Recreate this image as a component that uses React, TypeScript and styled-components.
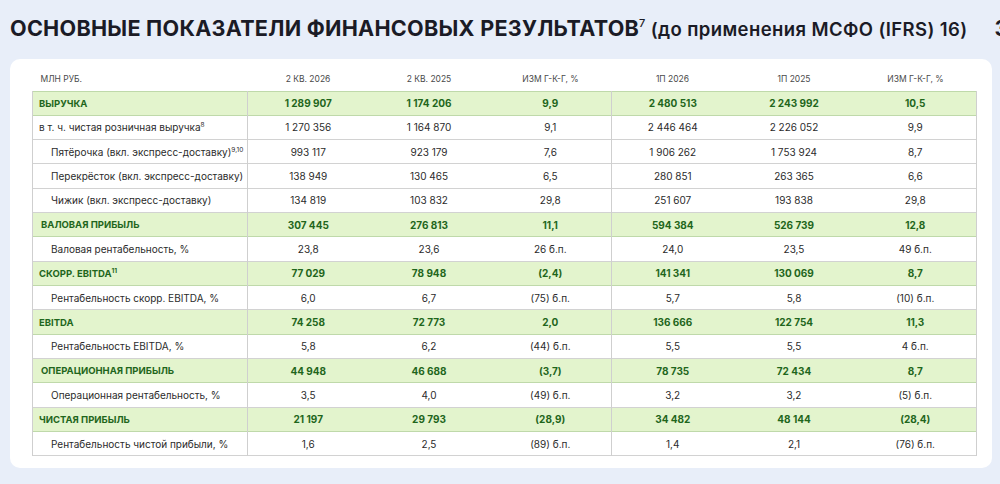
import React from "react";
import styled, { createGlobalStyle } from "styled-components";

const Global = createGlobalStyle`
  html, body { margin: 0; padding: 0; }
  body {
    background: #e8eef9;
    font-family: Inter, "Noto Sans", sans-serif;
    overflow: hidden;
    width: 1000px;
    height: 484px;
  }
`;

const Page = styled.div`
  padding: 0 8px 0 10px;
  height: 484px;
  box-sizing: border-box;
`;

const Title = styled.h1`
  margin: 0 0 17px 0;
  padding-top: 15px;
  line-height: 26px;
  font-size: 21.6px;
  font-weight: 700;
  color: #1b1b26;
  white-space: nowrap;
  letter-spacing: 0.25px;
`;

const TitleSup = styled.sup`
  font-size: 11px;
  font-weight: 500;
  vertical-align: 9px;
  line-height: 0;
`;

const Subtitle = styled.span`
  font-size: 18.5px;
  font-weight: 600;
  margin-left: 5px;
  letter-spacing: 0.4px;
`;

const Cut = styled.span`
  margin-left: 27px;
`;

const Card = styled.div`
  background: #ffffff;
  border-radius: 10px;
  width: 982px;
  box-sizing: border-box;
  padding: 0 16px 12px 22px;
`;

const Table = styled.table`
  width: 944px;
  border-collapse: collapse;
  table-layout: fixed;
  font-size: 10px;
  color: #262626;
`;

const Head = styled.th<{ $left?: boolean }>`
  height: 32px;
  box-sizing: border-box;
  padding: 9px 0 0 ${(p) => (p.$left ? "8px" : "0")};
  font-size: 8.5px;
  font-weight: 400;
  color: #4a4a4a;
  text-align: ${(p) => (p.$left ? "left" : "center")};
  text-transform: uppercase;
  white-space: nowrap;
`;

const Row = styled.tr<{ $total?: boolean }>`
  height: 24.33px;
  background: ${(p) => (p.$total ? "#e3f4cd" : "#ffffff")};
  border-top: 1px solid ${(p) => (p.$total ? "#bfd9aa" : "#d2d2d2")};
  border-bottom: 1px solid ${(p) => (p.$total ? "#bfd9aa" : "#d2d2d2")};
`;

const Label = styled.td<{ $total?: boolean; $indent: number }>`
  padding: 0 0 0 ${(p) => p.$indent}px;
  border-left: 1px solid #cfcfcf;
  border-right: 1px solid #cfcfcf;
  font-weight: ${(p) => (p.$total ? 700 : 400)};
  color: ${(p) => (p.$total ? "#1f661c" : "#2b2b2b")};
  font-size: ${(p) => (p.$total ? "9.5px" : "10px")};
  white-space: nowrap;
`;

const Cell = styled.td<{ $total?: boolean; $divider?: boolean }>`
  padding: 0;
  text-align: center;
  font-weight: ${(p) => (p.$total ? 700 : 400)};
  color: ${(p) => (p.$total ? "#1f661c" : "#2b2b2b")};
  border-right: ${(p) => (p.$divider ? "1px solid #cfcfcf" : "none")};
  white-space: nowrap;
`;

const Sup = styled.sup`
  font-size: 6.5px;
  vertical-align: 4px;
  line-height: 0;
`;

type RowData = {
  label: string;
  sup?: string;
  kind: "total" | "plain" | "sub";
  indent?: number;
  vals: string[];
};

const rows: RowData[] = [
  { label: "ВЫРУЧКА", kind: "total", vals: ["1 289 907", "1 174 206", "9,9", "2 480 513", "2 243 992", "10,5"] },
  { label: "в т. ч. чистая розничная выручка", sup: "8", kind: "plain", vals: ["1 270 356", "1 164 870", "9,1", "2 446 464", "2 226 052", "9,9"] },
  { label: "Пятёрочка (вкл. экспресс-доставку)", sup: "9,10", kind: "sub", vals: ["993 117", "923 179", "7,6", "1 906 262", "1 753 924", "8,7"] },
  { label: "Перекрёсток (вкл. экспресс-доставку)", kind: "sub", vals: ["138 949", "130 465", "6,5", "280 851", "263 365", "6,6"] },
  { label: "Чижик (вкл. экспресс-доставку)", kind: "sub", vals: ["134 819", "103 832", "29,8", "251 607", "193 838", "29,8"] },
  { label: "ВАЛОВАЯ ПРИБЫЛЬ", kind: "total", indent: 8, vals: ["307 445", "276 813", "11,1", "594 384", "526 739", "12,8"] },
  { label: "Валовая рентабельность, %", kind: "sub", vals: ["23,8", "23,6", "26 б.п.", "24,0", "23,5", "49 б.п."] },
  { label: "СКОРР. EBITDA", sup: "11", kind: "total", vals: ["77 029", "78 948", "(2,4)", "141 341", "130 069", "8,7"] },
  { label: "Рентабельность скорр. EBITDA, %", kind: "sub", vals: ["6,0", "6,7", "(75) б.п.", "5,7", "5,8", "(10) б.п."] },
  { label: "EBITDA", kind: "total", vals: ["74 258", "72 773", "2,0", "136 666", "122 754", "11,3"] },
  { label: "Рентабельность EBITDA, %", kind: "sub", vals: ["5,8", "6,2", "(44) б.п.", "5,5", "5,5", "4 б.п."] },
  { label: "ОПЕРАЦИОННАЯ ПРИБЫЛЬ", kind: "total", indent: 8, vals: ["44 948", "46 688", "(3,7)", "78 735", "72 434", "8,7"] },
  { label: "Операционная рентабельность, %", kind: "sub", vals: ["3,5", "4,0", "(49) б.п.", "3,2", "3,2", "(5) б.п."] },
  { label: "ЧИСТАЯ ПРИБЫЛЬ", kind: "total", vals: ["21 197", "29 793", "(28,9)", "34 482", "48 144", "(28,4)"] },
  { label: "Рентабельность чистой прибыли, %", kind: "sub", vals: ["1,6", "2,5", "(89) б.п.", "1,4", "2,1", "(76) б.п."] },
];

const heads = ["2 КВ. 2026", "2 КВ. 2025", "ИЗМ Г-К-Г, %", "1П 2026", "1П 2025", "ИЗМ Г-К-Г, %"];
const widths = [215, 121, 121, 122, 122, 121, 122];

export default function App() {
  return (
    <Page>
      <Global />
      <Title>
        ОСНОВНЫЕ ПОКАЗАТЕЛИ ФИНАНСОВЫХ РЕЗУЛЬТАТОВ<TitleSup>7</TitleSup>
        <Subtitle>(до применения МСФО (IFRS) 16)</Subtitle>
        <Cut>З</Cut>
      </Title>
      <Card>
        <Table>
          <colgroup>
            {widths.map((w, i) => (
              <col key={i} style={{ width: w }} />
            ))}
          </colgroup>
          <thead>
            <tr>
              <Head $left>МЛН РУБ.</Head>
              {heads.map((h, i) => (
                <Head key={i}>{h}</Head>
              ))}
            </tr>
          </thead>
          <tbody>
            {rows.map((r, i) => {
              const total = r.kind === "total";
              const indent = r.indent ?? (r.kind === "sub" ? 18 : 6);
              return (
                <Row key={i} $total={total}>
                  <Label $total={total} $indent={indent}>
                    {r.label}
                    {r.sup && <Sup>{r.sup}</Sup>}
                  </Label>
                  {r.vals.map((v, j) => (
                    <Cell key={j} $total={total} $divider={j === 2 || j === 5}>
                      {v}
                    </Cell>
                  ))}
                </Row>
              );
            })}
          </tbody>
        </Table>
      </Card>
    </Page>
  );
}
